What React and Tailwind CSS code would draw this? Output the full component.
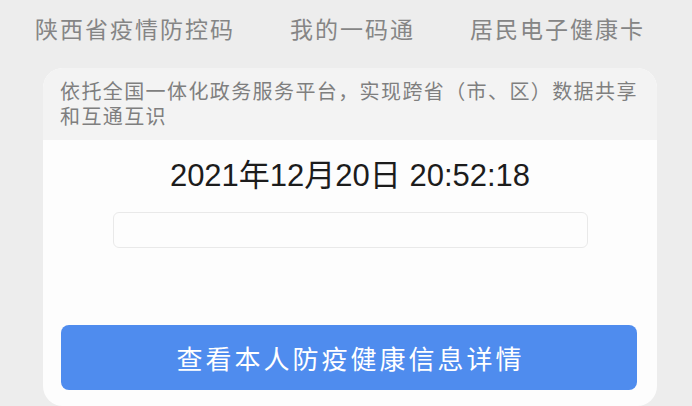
export default function App() {
  const font = { fontFamily: '"Noto Sans CJK SC", "Noto Sans", sans-serif' };
  return (
    <div className="w-[692px] h-[406px] overflow-hidden bg-[#ededed]" style={font}>
      <div className="h-[56px] flex items-center pl-[35px] gap-[55px] text-[23px] tracking-[2px] text-[#858585] leading-none">
        <span>陕西省疫情防控码</span>
        <span>我的一码通</span>
        <span>居民电子健康卡</span>
      </div>
      <div className="mt-[12px] ml-[43px] w-[614px] h-[338px] rounded-[20px] overflow-hidden bg-[#fdfdfd] flex flex-col">
        <div className="h-[72px] bg-[#f3f3f3] pl-[17px] pr-[8px] pt-[10px] text-[20px] leading-[25px] tracking-[1.4px] text-[#7f7f7f]">
          依托全国一体化政务服务平台，实现跨省（市、区）数据共享和互通互识
        </div>
        <div className="mt-[18px] text-center text-[31px] leading-[36px] text-[#1c1c1c]" style={{ fontFamily: '"Liberation Sans", "Noto Sans CJK SC", sans-serif' }}>
          2021年12月20日 20:52:18
        </div>
        <div className="mt-[18px] mx-auto w-[475px] h-[36px] rounded-[6px] border border-[#e9e9e9] bg-[#fdfdfd]" />
        <div className="mt-[77px] ml-[18px] w-[576px] h-[65px] rounded-[8px] bg-[#4f8cee] flex items-center justify-center text-white text-[26px] tracking-[3px] pl-[3px]">
          查看本人防疫健康信息详情
        </div>
      </div>
    </div>
  );
}
